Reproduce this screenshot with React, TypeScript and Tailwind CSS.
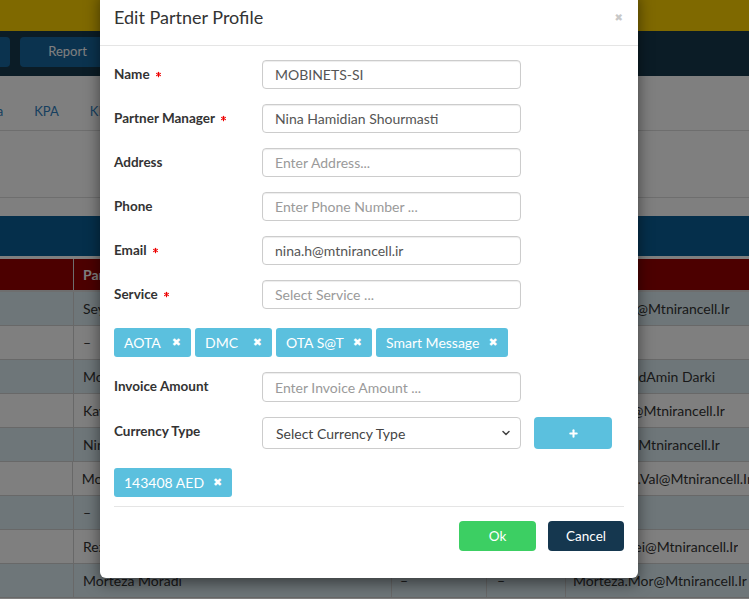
import { Asterisk, ChevronDown, Plus } from "lucide-react";

type Row = { name: string; email: string; blue: boolean };

const rows: Row[] = [
  { name: "Seyed Hossein Mousavi", email: "S.Hosseini@Mtnirancell.Ir", blue: true },
  { name: "–", email: "", blue: false },
  { name: "Mohammad Karimi", email: "MohammadAmin Darki", blue: true },
  { name: "Kaveh Khosravi", email: "Kaveh.Kh@Mtnirancell.Ir", blue: false },
  { name: "Nina Hamidian", email: "Nina.H.S@Mtnirancell.Ir", blue: true },
  { name: "Mohammad Vali", email: "Mohammad.Val@Mtnirancell.Ir", blue: false },
  { name: "–", email: "", blue: true },
  { name: "Reza Rezaei", email: "Reza.Rezaei@Mtnirancell.Ir", blue: false },
  { name: "Morteza Moradi", email: "Morteza.Mor@Mtnirancell.Ir", blue: true },
];

function Req() {
  return (
    <Asterisk
      size={9}
      strokeWidth={3}
      className="ml-[4px] inline-block align-[0px] text-[#ee0000]"
    />
  );
}

function Field({
  label,
  required,
  value,
  placeholder,
  mb = "mb-[15px]",
  h = "h-[29px]",
}: {
  label: string;
  required?: boolean;
  value?: string;
  placeholder?: string;
  mb?: string;
  h?: string;
}) {
  return (
    <div className={`flex items-start ${mb}`}>
      <label className="w-[148px] pt-[6px] text-[13.5px] leading-[16px] font-bold text-[#333]">
        {label}
        {required && <Req />}
      </label>
      <input
        defaultValue={value}
        placeholder={placeholder}
        className={`w-[259px] ${h} rounded-[4px] border border-[#cccccc] px-[12px] text-[14px] text-[#555] shadow-[inset_0_1px_1px_rgba(0,0,0,0.075)] outline-none placeholder:text-[#9a9a9a]`}
      />
    </div>
  );
}

function Chip({ text }: { text: string }) {
  return (
    <span className="inline-flex h-[29px] min-w-[77px] items-center justify-between rounded-[3px] bg-[#5bc0de] px-[10px] text-[14px] leading-[16px] text-white">
      {text}
      <span className="ml-[9px] font-['DejaVu_Sans',sans-serif] text-[11px] leading-[12px]">✖</span>
    </span>
  );
}

export default function App() {
  return (
    <div className="relative w-[749px] h-[599px] overflow-hidden bg-white font-['Lato','Liberation_Sans',sans-serif] text-[14px] text-[#333]">
      {/* page behind the dialog */}
      <div className="h-[31px] bg-[#ffd200]" />
      <div className="flex h-[45px] items-start gap-[10px] bg-[#16384c] pt-[6px] -ml-[60px]">
        <div className="h-[30px] w-[70px] rounded-[4px] bg-[#17679f]" />
        <div className="flex h-[30px] w-[95px] items-center justify-center rounded-[4px] bg-[#17679f] text-[13px] text-white">
          Report
        </div>
      </div>
      <div className="flex h-[55px] items-end gap-[31px] border-b border-[#dddddd] pb-[9px] text-[13px] text-[#2f7fc0]">
        <span className="-ml-[24px]">Data</span>
        <span>KPA</span>
        <span>KPI</span>
      </div>
      <div className="h-[67px] border-b border-[#dddddd]" />
      <div className="h-[18px]" />
      <div className="h-[40px] bg-[#0a5e96]" />
      <div className="h-[3px]" />
      <div className="flex h-[33px] items-center border-b-2 border-[#dddddd] bg-[#990000] font-bold text-white">
        <div className="h-full w-[74px] border-r border-[#dddddd]" />
        <div className="flex h-full w-[318px] items-center border-r border-[#dddddd] pl-[9px]">Partner Name</div>
        <div className="h-full w-[95px] border-r border-[#dddddd]" />
        <div className="h-full w-[79px] border-r border-[#dddddd]" />
        <div className="pl-[7px]">Email</div>
      </div>
      {rows.map((r, i) => (
        <div
          key={i}
          className={`flex h-[34px] items-center border-b border-[#d0d0d0] ${r.blue ? "bg-[#dcedf2]" : "bg-white"}`}
        >
          <div className="h-full w-[74px] border-r border-[#d0d0d0]" />
          <div className="flex h-full w-[318px] items-center border-r border-[#d0d0d0] pl-[9px]">{r.name}</div>
          <div className="flex h-full w-[95px] items-center border-r border-[#d0d0d0] pl-[8px]">–</div>
          <div className="flex h-full w-[79px] items-center border-r border-[#d0d0d0] pl-[10px]">–</div>
          <div className="overflow-hidden whitespace-nowrap pl-[7px]">{r.email}</div>
        </div>
      ))}

      {/* backdrop */}
      <div className="absolute inset-0 bg-black/50" />

      {/* dialog */}
      <div className="absolute left-[100px] top-[-10px] w-[538px] rounded-[6px] bg-white shadow-[0_5px_15px_rgba(0,0,0,0.5)]">
        <div className="flex h-[56px] items-center justify-between border-b border-[#e5e5e5] pl-[14px] pr-[15px]">
          <h4 className="text-[18px] text-[#333]">Edit Partner Profile</h4>
          <span className="font-['DejaVu_Sans',sans-serif] text-[10px] text-[#c8c8c8]">✖</span>
        </div>

        <div className="px-[14px] pt-[14px] pb-[27px]">
          <Field label="Name" required value="MOBINETS-SI" />
          <Field label="Partner Manager" required value="Nina Hamidian Shourmasti" />
          <Field label="Address" placeholder="Enter Address..." />
          <Field label="Phone" placeholder="Enter Phone Number ..." mb="mb-[15px] mt-[1px]" />
          <Field label="Email" required value="nina.h@mtnirancell.ir" />
          <Field label="Service" required placeholder="Select Service ..." mb="mb-[19px]" />

          <div className="mb-[15px] flex gap-[4px]">
            <Chip text="AOTA" />
            <Chip text="DMC" />
            <Chip text="OTA S@T" />
            <Chip text="Smart Message" />
          </div>

          <Field label="Invoice Amount" placeholder="Enter Invoice Amount ..." h="h-[30px]" />

          <div className="mb-[19px] flex items-start">
            <label className="w-[148px] pt-[6px] text-[13.5px] leading-[16px] font-bold text-[#333]">Currency Type</label>
            <div className="relative w-[259px]">
              <select className="h-[32px] w-full appearance-none rounded-[4px] border border-[#cccccc] bg-white pl-[13px] text-[14px] text-[#444] outline-none">
                <option>Select Currency Type</option>
              </select>
              <ChevronDown
                size={12}
                strokeWidth={3}
                className="pointer-events-none absolute right-[9px] top-[10px] text-[#444]"
              />
            </div>
            <button className="ml-[13px] flex h-[32px] w-[78px] items-center justify-center rounded-[4px] bg-[#5bc0de] text-white">
              <Plus size={11} strokeWidth={4.5} />
            </button>
          </div>

          <div className="mb-[9px] flex">
            <Chip text="143408 AED" />
          </div>

          <div className="border-t border-[#e5e5e5]" />

          <div className="mt-[14px] flex justify-end gap-[12px]">
            <button className="h-[30px] w-[77px] rounded-[4px] bg-[#3ccf63] text-[13.5px] text-white">Ok</button>
            <button className="h-[30px] w-[76px] rounded-[4px] bg-[#15374f] text-[13.5px] text-white">Cancel</button>
          </div>
        </div>
      </div>
    </div>
  );
}
